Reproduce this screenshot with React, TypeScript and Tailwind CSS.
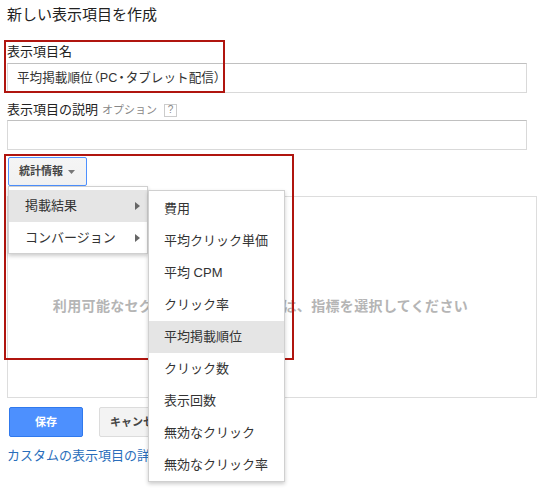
import React from "react";

const font = { fontFamily: '"Liberation Sans", "Noto Sans CJK JP", sans-serif' };

function Arrow() {
  return (
    <svg width="5" height="8" viewBox="0 0 5 8" className="block">
      <path d="M0 0 L5 4 L0 8 Z" fill="#666" />
    </svg>
  );
}

export default function App() {
  const sub = [
    "費用",
    "平均クリック単価",
    "平均 CPM",
    "クリック率",
    "平均掲載順位",
    "クリック数",
    "表示回数",
    "無効なクリック",
    "無効なクリック率",
  ];
  return (
    <div className="relative w-[547px] h-[488px] bg-white overflow-hidden text-[#222]" style={font}>
      <div className="pl-[7px]">
        <div className="pt-[5px] text-[15px] leading-[20px] text-[#222]">新しい表示項目を作成</div>
        <div className="mt-[19px] text-[13px] leading-[16px] text-[#222]">表示項目名</div>
        <div className="mt-[3px] w-[520px] h-[30px] border border-[#d9d9d9] border-t-[#c0c0c0] flex items-center pl-[9px] text-[12.6px] text-[#333]">
          平均掲載順位<span className="[font-feature-settings:'halt'] ml-[1px]">（</span>PC<span className="[font-feature-settings:'halt'] mx-[1px]">・</span>タブレット配信<span className="[font-feature-settings:'halt']">）</span>
        </div>
        <div className="mt-[9px] flex items-center text-[13px] leading-[16px]">
          <span className="text-[#222]">表示項目の説明</span>
          <span className="ml-[4px] text-[11px] text-[#888]">オプション</span>
          <span className="ml-[7px] w-[13px] h-[13px] border border-[#ccc] flex items-center justify-center text-[10px] leading-none text-[#888]">?</span>
        </div>
        <div className="mt-[2px] w-[520px] h-[30px] border border-[#d9d9d9] border-t-[#c0c0c0]" />
        <div className="mt-[7px] ml-[1px] w-[79px] h-[29px] border border-[#4d90fe] rounded-[2px] bg-gradient-to-b from-[#f5f5f5] to-[#f1f1f1] flex items-center pl-[10px] text-[11px] font-bold text-[#444]">
          統計情報
          <svg width="7" height="4" viewBox="0 0 7 4" className="ml-[5px]">
            <path d="M0 0 L7 0 L3.5 4 Z" fill="#777" />
          </svg>
        </div>
        <div className="mt-[10px] w-[530px] h-[202px] border border-[#dddddd] pt-[99px] pr-[23px] text-center text-[14px] leading-[20px] tracking-[0.35px] font-bold text-[#b5b5b5]">
          利用可能なセグメントを表示するには、指標を選択してください
        </div>
        <div className="mt-[9px] ml-[2px] flex items-center">
          <div className="w-[74px] h-[30px] rounded-[2px] bg-[#4d90fe] border border-[#3079ed] flex items-center justify-center text-[11px] font-bold text-white">
            保存
          </div>
          <div className="ml-[16px] w-[72px] h-[30px] rounded-[2px] bg-[#f3f3f3] border border-[#dcdcdc] flex items-center pl-[10px] text-[11px] font-bold text-[#444]">
            キャンセル
          </div>
        </div>
        <div className="mt-[11px] text-[13px] leading-[16px] text-[#2a6ebb]">カスタムの表示項目の詳細</div>
      </div>

      {/* annotation boxes */}
      <div className="absolute left-[4px] top-[40px] w-[221px] h-[53px] border-2 border-[#b0150f] pointer-events-none" />
      <div className="absolute left-[4px] top-[154px] w-[290px] h-[206px] border-2 border-[#b0150f] pointer-events-none" />

      {/* menu 1 */}
      <div className="absolute left-[8px] top-[186px] w-[140px] h-[68px] bg-white border border-[#d0d0d0] shadow-[0_2px_4px_rgba(0,0,0,0.2)] pt-[3px]">
        <div className="h-[32px] bg-[#e5e5e5] flex items-center justify-between pl-[16px] pr-[7px] text-[13px] text-[#333]">
          <span>掲載結果</span>
          <Arrow />
        </div>
        <div className="h-[32px] flex items-center justify-between pl-[16px] pr-[7px] text-[13px] text-[#333]">
          <span>コンバージョン</span>
          <Arrow />
        </div>
      </div>

      {/* submenu */}
      <div className="absolute left-[148px] top-[190px] w-[137px] h-[292px] bg-white border border-[#d0d0d0] shadow-[0_2px_4px_rgba(0,0,0,0.2)] pt-[2px]">
        {sub.map((s) => (
          <div
            key={s}
            className={
              "h-[32px] flex items-center pl-[15px] text-[13px] text-[#333] " +
              (s === "平均掲載順位" ? "bg-[#e5e5e5]" : "")
            }
          >
            {s}
          </div>
        ))}
      </div>
    </div>
  );
}
